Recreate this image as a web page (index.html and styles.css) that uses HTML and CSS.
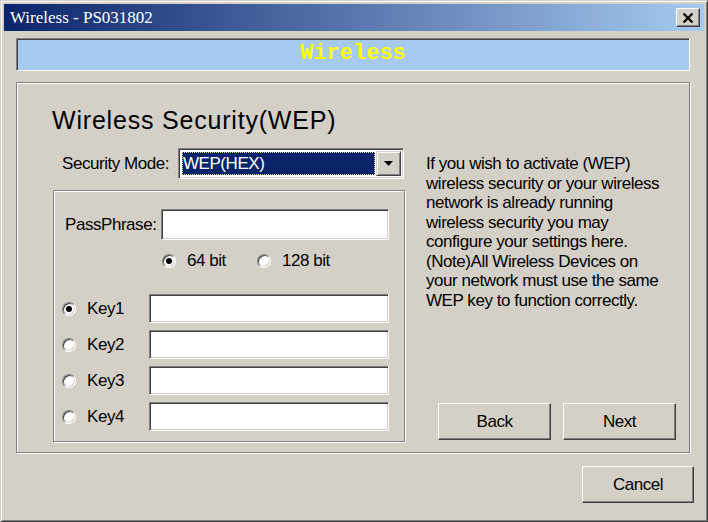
FILE: index.html
```html
<!DOCTYPE html>
<html>
<head>
<meta charset="utf-8">
<link rel="stylesheet" href="styles.css">
</head>
<body>
<div class="window">
  <div class="titlebar">
    <span class="title">Wireless - PS031802</span>
    <button class="close" type="button"><svg width="12" height="10" viewBox="0 0 12 10"><path d="M1.5 0.5 L10.5 9.5 M10.5 0.5 L1.5 9.5" stroke="#000" stroke-width="2.2" fill="none"/></svg></button>
  </div>
  <div class="body">
    <div class="banner">Wireless</div>
    <div class="group main">
      <h1 class="heading">Wireless Security(WEP)</h1>
      <div class="content">
        <div class="left">
          <div class="mode-row">
            <span class="label">Security Mode:</span>
            <div class="select">
              <div class="select-value"><span>WEP(HEX)</span></div>
              <div class="select-btn"><svg width="9" height="5" viewBox="0 0 9 5"><path d="M0 0 H9 L4.5 5 Z" fill="#000"/></svg></div>
            </div>
          </div>
          <div class="group inner">
            <div class="pass-row">
              <span class="label pass-label">PassPhrase:</span>
              <div class="field pass-field"></div>
            </div>
            <div class="bits-row">
              <span class="opt opt64"><span class="radio on"></span><span class="opt-text">64 bit</span></span>
              <span class="opt"><span class="radio"></span><span class="opt-text">128 bit</span></span>
            </div>
            <div class="keys">
              <div class="key-row"><span class="radio on"></span><span class="key-label">Key1</span><div class="field key-field"></div></div>
              <div class="key-row"><span class="radio"></span><span class="key-label">Key2</span><div class="field key-field"></div></div>
              <div class="key-row"><span class="radio"></span><span class="key-label">Key3</span><div class="field key-field"></div></div>
              <div class="key-row"><span class="radio"></span><span class="key-label">Key4</span><div class="field key-field"></div></div>
            </div>
          </div>
        </div>
        <div class="right">
          <p class="help">If you wish to activate (WEP)<br>wireless security or your wireless<br>network is already running<br>wireless security you may<br>configure your settings here.<br>(Note)All Wireless Devices on<br>your network must use the same<br>WEP key to function correctly.</p>
          <div class="nav">
            <button class="btn" type="button">Back</button>
            <button class="btn" type="button">Next</button>
          </div>
        </div>
      </div>
    </div>
    <div class="footer">
      <button class="btn cancel" type="button">Cancel</button>
    </div>
  </div>
</div>
</body>
</html>
```

FILE: styles.css
```css
* { box-sizing: border-box; }
html, body { margin: 0; padding: 0; background: #d4d0c8; }
body {
  font-family: "Liberation Sans", Arial, sans-serif;
  font-size: 17px;
  letter-spacing: -0.45px;
  color: #000;
}
.window {
  width: 708px;
  height: 522px;
  background: #d4d0c8;
  border: 1px solid;
  border-color: #d4d0c8 #404040 #404040 #d4d0c8;
  box-shadow: inset 1px 1px #fff, inset -1px -1px #808080;
  padding: 3px;
  display: flex;
  flex-direction: column;
}
.titlebar {
  height: 27px;
  flex: none;
  background: linear-gradient(to right, #0a246a, #a6caf0);
  display: flex;
  align-items: center;
  justify-content: space-between;
  padding: 0 4px 0 6px;
}
.title {
  font-family: "Liberation Serif", serif;
  font-size: 17px;
  letter-spacing: 0;
  color: #fff;
}
.close {
  width: 24px;
  height: 19px;
  padding: 0;
  background: #d4d0c8;
  border: 1px solid;
  border-color: #fff #404040 #404040 #fff;
  box-shadow: inset -1px -1px #808080, inset 1px 1px #d4d0c8;
  display: flex;
  align-items: center;
  justify-content: center;
}
.body {
  flex: 1;
  display: flex;
  flex-direction: column;
  padding: 7px 14px 0 12px;
}
.banner {
  height: 33px;
  flex: none;
  background: #a6caf0;
  border: 1px solid;
  border-color: #808080 #fff #fff #808080;
  box-shadow: inset 1px 1px #404040;
  display: flex;
  align-items: center;
  justify-content: center;
  font-family: "Liberation Mono", monospace;
  font-weight: bold;
  font-size: 22px;
  letter-spacing: 0;
  color: #ffff00;
  padding-bottom: 2px;
}
.group {
  border: 1px solid #808080;
  box-shadow: inset 1px 1px #fff, 1px 1px #fff;
}
.main {
  margin-top: 11px;
  height: 371px;
  flex: none;
  padding: 23px 13px 10px 36px;
  display: flex;
  flex-direction: column;
}
.heading {
  margin: 0 0 13px -1px;
  font-family: "Liberation Sans", sans-serif;
  font-weight: normal;
  font-size: 25px;
  line-height: 29px;
  letter-spacing: 0.8px;
}
.content {
  flex: 1;
  display: flex;
}
.left {
  width: 352px;
  flex: none;
  display: flex;
  flex-direction: column;
}
.label { white-space: nowrap; }
.mode-row {
  height: 31px;
  display: flex;
  align-items: center;
  justify-content: space-between;
  padding: 0 1px 0 9px;
}
.select {
  width: 226px;
  height: 31px;
  background: #fff;
  border: 1px solid;
  border-color: #808080 #fff #fff #808080;
  box-shadow: inset 1px 1px #404040, inset -1px -1px #d4d0c8;
  padding: 2px;
  display: flex;
}
.select-value {
  flex: 1;
  margin: 1px;
  background: #0a246a;
  outline: 1px dotted #e8d890;
  outline-offset: -1px;
  color: #fff;
  display: flex;
  align-items: center;
  padding-left: 1px;
  line-height: 1;
}
.select-btn {
  width: 25px;
  flex: none;
  background: #d4d0c8;
  border: 1px solid;
  border-color: #d4d0c8 #404040 #404040 #d4d0c8;
  box-shadow: inset 1px 1px #fff, inset -1px -1px #808080;
  display: flex;
  align-items: center;
  justify-content: center;
}
.inner {
  margin-top: 11px;
  flex: 1;
  padding: 18px 15px 10px 8px;
  display: flex;
  flex-direction: column;
}
.field {
  background: #fff;
  border: 1px solid;
  border-color: #808080 #fff #fff #808080;
  box-shadow: inset 1px 1px #404040, inset -1px -1px #d4d0c8;
}
.pass-row {
  display: flex;
  align-items: center;
  justify-content: space-between;
}
.pass-label { margin-left: 3px; }
.pass-field { width: 228px; height: 31px; }
.bits-row {
  margin-top: 11px;
  height: 20px;
  display: flex;
  align-items: center;
  padding-left: 100px;
}
.opt {
  display: flex;
  align-items: center;
  white-space: nowrap;
}
.opt64 { width: 95px; }
.opt-text { margin-left: 11px; }
.radio {
  width: 14px;
  height: 14px;
  flex: none;
  border-radius: 50%;
  border: 1px solid;
  border-color: #808080 #fff #fff #808080;
  box-shadow: inset 1px 1px #404040, inset -1px -1px #d4d0c8;
  background: #fff;
  display: flex;
  align-items: center;
  justify-content: center;
}
.radio.on::after {
  content: "";
  width: 6px;
  height: 6px;
  border-radius: 50%;
  background: #000;
}
.keys {
  margin-top: 23px;
  display: flex;
  flex-direction: column;
  gap: 7px;
}
.key-row {
  height: 29px;
  display: flex;
  align-items: center;
}
.key-label { margin-left: 11px; }
.key-field { width: 240px; height: 29px; margin-left: auto; }
.right {
  width: 250px;
  flex: none;
  margin-left: 21px;
  display: flex;
  flex-direction: column;
}
.help {
  margin: 6px 0 0;
  line-height: 19.5px;
  white-space: nowrap;
}
.nav {
  margin-top: auto;
  margin-bottom: 2px;
  padding-left: 12px;
  display: flex;
  justify-content: space-between;
}
.btn {
  width: 113px;
  height: 37px;
  padding: 0;
  font: inherit;
  letter-spacing: inherit;
  color: #000;
  background: #d4d0c8;
  border: 1px solid;
  border-color: #fff #404040 #404040 #fff;
  box-shadow: inset -1px -1px #808080, inset 1px 1px #d4d0c8;
}
.footer {
  margin-top: 13px;
  margin-right: -4px;
  display: flex;
  justify-content: flex-end;
}
.cancel { width: 112px; }
```
